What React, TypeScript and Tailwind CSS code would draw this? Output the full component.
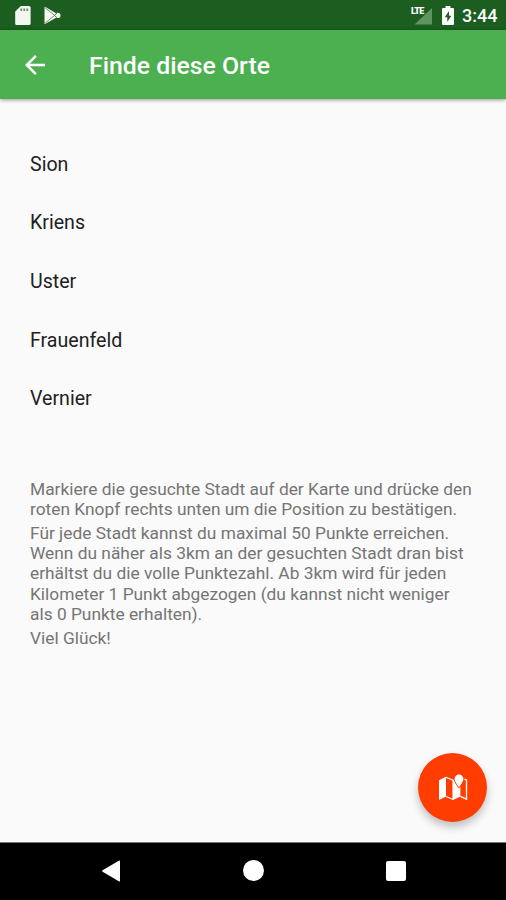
const places = ['Sion', 'Kriens', 'Uster', 'Frauenfeld', 'Vernier']

const paragraphs = [
    [
        'Markiere die gesuchte Stadt auf der Karte und drücke den',
        'roten Knopf rechts unten um die Position zu bestätigen.',
    ],
    [
        'Für jede Stadt kannst du maximal 50 Punkte erreichen.',
        'Wenn du näher als 3km an der gesuchten Stadt dran bist',
        'erhältst du die volle Punktezahl. Ab 3km wird für jeden',
        'Kilometer 1 Punkt abgezogen (du kannst nicht weniger',
        'als 0 Punkte erhalten).',
    ],
    ['Viel Glück!'],
]

function StatusBar() {
    return (
        <div className="h-[30px] shrink-0 bg-[#1b5e20] flex items-center text-white">
            <svg className="ml-[15px] w-4 h-[19px]" viewBox="0 0 16 19">
                <path
                    d="M5.8 0H14Q15.6 0 15.6 1.6V17.4Q15.6 19 14 19H1.8Q.2 19 .2 17.4V5.6Z"
                    fill="#f4f6f0"
                />
                <path d="M6.3 2.6v2.4M9.3 2.6v2.4M12.3 2.6v2.4" stroke="#6f906d" strokeWidth="1.8" />
            </svg>
            <svg className="ml-[13px] w-[17px] h-[19px]" viewBox="0 0 17 19">
                <path d="M.5 1.4Q.5.4 1.5 1L12.5 7.4V11.4L1.5 17.8Q.5 18.4.5 17.2Z" fill="#f4f6f0" />
                <path d="M1 1.6 10.6 9.4 1 17.2" fill="none" stroke="#6f906d" strokeWidth="1" />
                <circle cx="13.8" cy="9.4" r="2.7" fill="#f4f6f0" />
                <path d="M10.6 9.4 13 6.9M10.6 9.4 13 11.9" stroke="#4f7a50" strokeWidth="1" />
            </svg>
            <div className="ml-auto relative w-6 h-[19px]">
                <svg className="w-6 h-[19px]" viewBox="0 0 24 19">
                    <path d="M23 2V18.5H5.5Z" fill="#5f9362" />
                </svg>
                <span className="absolute left-0.5 top-0 text-[9px] leading-[10px] font-black tracking-[-0.7px]">
                    LTE
                </span>
            </div>
            <svg className="ml-[9px] w-3 h-[19px]" viewBox="0 0 12 19">
                <path
                    d="M3.6 0H8.4V2H11Q12 2 12 3V18Q12 19 11 19H1Q0 19 0 18V3Q0 2 1 2H3.6Z"
                    fill="#fff"
                />
                <path d="M7 5 2.8 11.2H5.3V16L9.3 9.7H7Z" fill="#1b5e20" />
            </svg>
            <span className="ml-[8px] mr-[9px] w-[35px] whitespace-nowrap text-[18px] leading-[22px] font-medium pt-px">
                3:44
            </span>
        </div>
    )
}

function Toolbar() {
    return (
        <header className="h-[69px] shrink-0 bg-[#4caf50] flex items-center shadow-[0_1px_4px_rgba(0,0,0,0.4)]">
            <svg className="ml-[20px] w-[30px] h-[30px]" viewBox="0 0 24 24" fill="#fff">
                <path d="M20 11H7.83l5.59-5.59L12 4l-8 8 8 8 1.41-1.41L7.83 13H20v-2z" />
            </svg>
            <h1 className="ml-[39px] text-[24.8px] leading-[30px] font-medium text-white pt-0.5">
                Finde diese Orte
            </h1>
        </header>
    )
}

function NavigationBar() {
    return (
        <nav className="h-[58px] shrink-0 bg-black border-t border-[#777] flex items-center justify-between pl-[102px] pr-[100px] pb-0.5">
            <svg className="w-[18px] h-[22px]" viewBox="0 0 18 22" fill="#fff">
                <path d="M16.8.7Q18 0 18 1.2V20.8Q18 22 16.8 21.3L.6 11.8Q-.4 11 .6 10.2Z" />
            </svg>
            <div className="size-[21px] rounded-full bg-white" />
            <div className="size-[20px] rounded-[2px] bg-white" />
        </nav>
    )
}

function MapIcon() {
    return (
        <svg className="w-[30px] h-[28px]" viewBox="0 0 30 28">
            <path d="M1 6.2 8 2.8V22.4L1 26Z" fill="#fff" />
            <path d="M8 3.3 15 6.2V25.4L8 22.4" fill="none" stroke="#fff" strokeWidth="1.1" />
            <path d="M15 6.2 17 5.2 21 13.5 22.4 11.5V22.4L15 26Z" fill="#fff" />
            <path d="M22.4 22.4 28.5 25.2V6L26.4 5.1" fill="none" stroke="#fff" strokeWidth="1.3" />
            <path
                d="M21 .4A4.4 4.4 0 0 0 16.6 4.8C16.6 8 21 13.2 21 13.2S25.4 8 25.4 4.8A4.4 4.4 0 0 0 21 .4Z"
                fill="#fff"
                stroke="#ff3d00"
                strokeWidth="1.6"
                paintOrder="stroke"
            />
        </svg>
    )
}

export default function App() {
    return (
        <div className="w-full h-[900px] flex flex-col bg-[#fafafa] font-['Roboto',sans-serif] overflow-hidden">
            <StatusBar />
            <Toolbar />
            <main className="relative flex-grow px-[30px] pt-[36.5px]">
                <ul>
                    {places.map((place) => (
                        <li
                            key={place}
                            className="h-[58.6px] flex items-center text-[19.6px] leading-[24px] text-[#212121]"
                        >
                            {place}
                        </li>
                    ))}
                </ul>
                <div className="mt-[50.5px] flex flex-col gap-[3.6px] text-[17.34px] leading-[20.2px] text-[#757575]">
                    {paragraphs.map((lines) => (
                        <p key={lines[0]}>
                            {lines.map((line) => (
                                <span key={line} className="block whitespace-nowrap">
                                    {line}
                                </span>
                            ))}
                        </p>
                    ))}
                </div>
                <button
                    aria-label="Karte"
                    className="absolute right-[19px] bottom-[20px] size-[69px] rounded-full bg-[#ff3d00] flex items-center justify-center shadow-[0_5px_8px_rgba(0,0,0,0.24)]"
                >
                    <MapIcon />
                </button>
            </main>
            <NavigationBar />
        </div>
    )
}
